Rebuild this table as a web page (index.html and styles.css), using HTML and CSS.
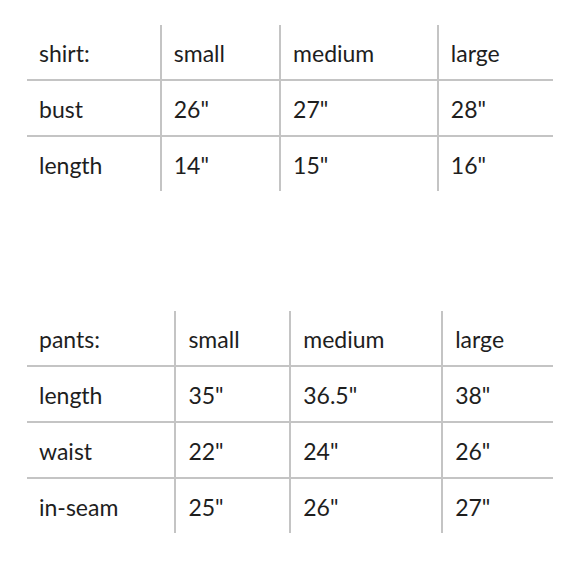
FILE: index.html
```html
<!DOCTYPE html>
<html>
<head>
<meta charset="utf-8">
<link rel="stylesheet" href="styles.css">
</head>
<body>
<div class="page">
  <table class="size-table">
    <tr><td>shirt:</td><td>small</td><td>medium</td><td>large</td></tr>
    <tr><td>bust</td><td>26"</td><td>27"</td><td>28"</td></tr>
    <tr><td>length</td><td>14"</td><td>15"</td><td>16"</td></tr>
  </table>
  <table class="size-table">
    <tr><td>pants:</td><td>small</td><td>medium</td><td>large</td></tr>
    <tr><td>length</td><td>35"</td><td>36.5"</td><td>38"</td></tr>
    <tr><td>waist</td><td>22"</td><td>24"</td><td>26"</td></tr>
    <tr><td>in-seam</td><td>25"</td><td>26"</td><td>27"</td></tr>
  </table>
</div>
</body>
</html>
```
FILE: styles.css
```css
html, body {
  margin: 0;
  padding: 0;
  background: #fff;
}
.page {
  padding: 25px 27px 0 27px;
  font-family: Lato, "Liberation Sans", sans-serif;
  font-size: 23px;
  color: #1e1e1e;
}
.size-table {
  width: 100%;
  border-collapse: collapse;
  margin-bottom: 120px;
}
.size-table:last-child {
  margin-bottom: 0;
}
.size-table td {
  height: 56px;
  padding: 2px 28px 0 12px;
  box-sizing: border-box;
  vertical-align: middle;
  text-align: left;
  border-top: 2px solid #c4c4c4;
  border-left: 2px solid #c4c4c4;
  white-space: nowrap;
}
.size-table tr:first-child td {
  border-top: none;
  height: 55px;
}
.size-table tr:last-child td {
  height: 55px;
}
.size-table td:first-child {
  border-left: none;
}
```
